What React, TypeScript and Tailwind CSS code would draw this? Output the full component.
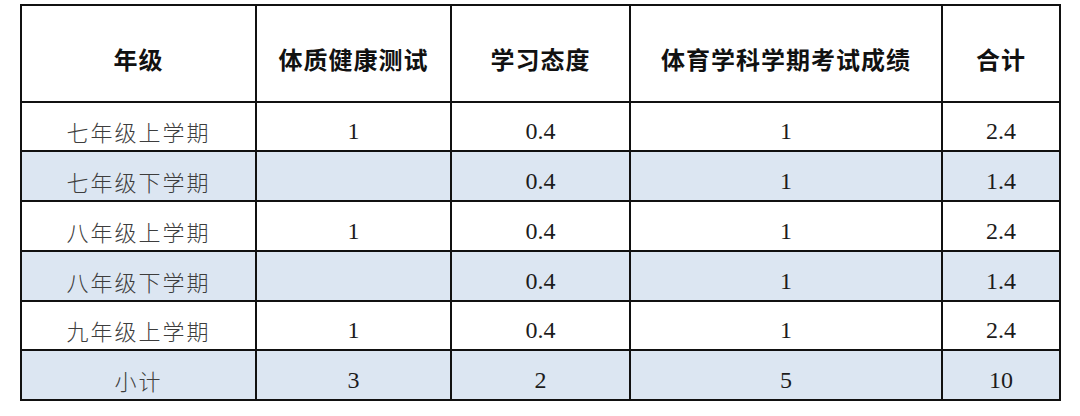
import React from "react";

interface Row {
  term: string;
  fitness: string;
  attitude: string;
  exam: string;
  total: string;
  shaded?: boolean;
}

const rows: Row[] = [
  { term: "七年级上学期", fitness: "1", attitude: "0.4", exam: "1", total: "2.4" },
  { term: "七年级下学期", fitness: "", attitude: "0.4", exam: "1", total: "1.4", shaded: true },
  { term: "八年级上学期", fitness: "1", attitude: "0.4", exam: "1", total: "2.4" },
  { term: "八年级下学期", fitness: "", attitude: "0.4", exam: "1", total: "1.4", shaded: true },
  { term: "九年级上学期", fitness: "1", attitude: "0.4", exam: "1", total: "2.4" },
  { term: "小计", fitness: "3", attitude: "2", exam: "5", total: "10", shaded: true },
];

const heights = ["h-[49px]", "h-[50px]", "h-[50px]", "h-[50px]", "h-[49px]", "h-[50px]"];

const cjk = "font-['Noto_Sans_CJK_SC',sans-serif]";
const num = "font-['Liberation_Serif','Times_New_Roman',serif]";

const App: React.FC = () => {
  const headers = ["年级", "体质健康测试", "学习态度", "体育学科学期考试成绩", "合计"];

  return (
    <div className="w-[1080px] h-[416px] bg-white pt-[4px] pl-[20px]">
      <table className="table-fixed border-collapse w-[1039px] border-2 border-[#111]">
        <colgroup>
          <col className="w-[235px]" />
          <col className="w-[195px]" />
          <col className="w-[179px]" />
          <col className="w-[312px]" />
          <col className="w-[118px]" />
        </colgroup>
        <thead>
          <tr className="h-[97px]">
            {headers.map((h) => (
              <th
                key={h}
                className={`border-2 border-[#111] pt-[10px] text-center align-middle text-[24px] font-bold tracking-[1px] text-[#111] ${cjk}`}
              >
                {h}
              </th>
            ))}
          </tr>
        </thead>
        <tbody>
          {rows.map((r, i) => {
            const bg = r.shaded ? "bg-[#dce6f2]" : "bg-white";
            const cell = `border-2 border-[#111] pt-[9px] text-center align-middle leading-none`;
            return (
              <tr key={r.term} className={`${heights[i]} ${bg}`}>
                <td className={`${cell} text-[22px] font-light tracking-[2px] text-[#3d3d3d] ${cjk}`}>
                  {r.term}
                </td>
                <td className={`${cell} text-[24px] text-[#1c1c1c] ${num}`}>{r.fitness}</td>
                <td className={`${cell} text-[24px] text-[#1c1c1c] ${num}`}>{r.attitude}</td>
                <td className={`${cell} text-[24px] text-[#1c1c1c] ${num}`}>{r.exam}</td>
                <td className={`${cell} text-[24px] text-[#1c1c1c] ${num}`}>{r.total}</td>
              </tr>
            );
          })}
        </tbody>
      </table>
    </div>
  );
};

export default App;
